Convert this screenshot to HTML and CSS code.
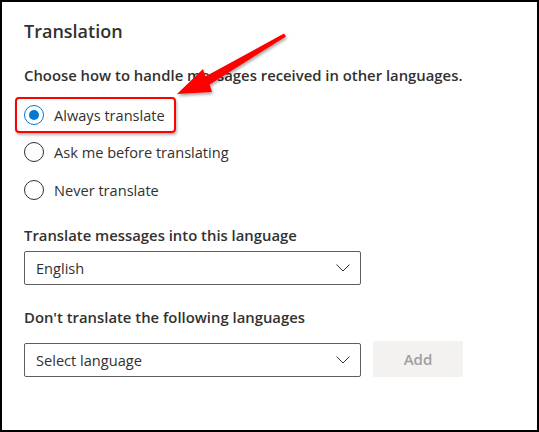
FILE: index.html
```html
<!DOCTYPE html>
<html>
<head>
<meta charset="utf-8">
<link rel="stylesheet" href="styles.css">
</head>
<body>
<div class="frame">
  <h1 class="title">Translation</h1>
  <p class="intro">Choose how to handle messages received in other languages.</p>
  <div class="radios">
    <div class="radio-row highlighted">
      <span class="radio checked"><span class="dot"></span></span>
      <span class="label">Always translate</span>
    </div>
    <div class="radio-row">
      <span class="radio"></span>
      <span class="label">Ask me before translating</span>
    </div>
    <div class="radio-row">
      <span class="radio"></span>
      <span class="label">Never translate</span>
    </div>
  </div>
  <div class="field">
    <div class="field-label">Translate messages into this language</div>
    <div class="select">
      <span class="value">English</span>
      <svg class="chev" width="14" height="8" viewBox="0 0 14 8"><path d="M0.5 0.5 L7 7 L13.5 0.5" fill="none" stroke="#323130" stroke-width="1"/></svg>
    </div>
  </div>
  <div class="field second">
    <div class="field-label">Don't translate the following languages</div>
    <div class="row">
      <div class="select">
        <span class="value placeholder">Select language</span>
        <svg class="chev" width="14" height="8" viewBox="0 0 14 8"><path d="M0.5 0.5 L7 7 L13.5 0.5" fill="none" stroke="#323130" stroke-width="1"/></svg>
      </div>
      <button class="add">Add</button>
    </div>
  </div>
  <svg class="arrow" width="539" height="432" viewBox="0 0 539 432">
    <defs>
      <filter id="sh" x="-20%" y="-20%" width="140%" height="140%">
        <feGaussianBlur in="SourceAlpha" stdDeviation="1.5"/>
        <feOffset dx="1" dy="2"/>
        <feComponentTransfer><feFuncA type="linear" slope="0.35"/></feComponentTransfer>
        <feMerge><feMergeNode/><feMergeNode in="SourceGraphic"/></feMerge>
      </filter>
    </defs>
    <path d="M177 94 L212 92 L209.7 84.4 L286 36.5 L284 33.5 L205.3 76.6 L203 69 Z" fill="#ff0000" filter="url(#sh)"/>
  </svg>
</div>
</body>
</html>
```
FILE: styles.css
```css
html, body { margin: 0; padding: 0; background: #fff; }
body { font-family: "Open Sans", "Noto Sans", sans-serif; color: #323130; }
.frame {
  position: relative;
  width: 539px; height: 432px; box-sizing: border-box;
  border: 2px solid #000;
  padding: 16px 22px 0 22px;
}
.title { margin: 0; font-size: 18px; font-weight: 600; line-height: 26px; color: #323130; }
.intro { margin: 21px 0 0 0; font-size: 14.85px; line-height: 20px; font-weight: 600; }
.radios { display: flex; flex-direction: column; margin-top: 11px; }
.radio-row { display: flex; align-items: center; height: 37.5px; gap: 10px; position: relative; }
.radio-row.highlighted::before {
  content: ""; position: absolute; left: -9px; top: 0.5px; width: 157px; height: 32px;
  border: 2px solid #ff0000; border-radius: 4px;
  box-shadow: 1px 2px 3px rgba(0,0,0,0.3);
}
.radio { width: 18px; height: 18px; border: 1px solid #323130; border-radius: 50%; display: flex; align-items: center; justify-content: center; flex: none; }
.radio.checked { border-color: #0078d4; }
.dot { width: 10px; height: 10px; border-radius: 50%; background: #0078d4; }
.label { font-size: 14.6px; line-height: 20px; }
.field { margin-top: 16px; }
.field.second { margin-top: 22px; }
.field-label { font-size: 14.85px; font-weight: 600; line-height: 20px; }
.select {
  margin-top: 6px; width: 337px; height: 34px; box-sizing: border-box;
  border: 1px solid #605e5c; border-radius: 2px;
  display: flex; align-items: center; justify-content: space-between;
  padding: 0 10px 0 11px;
}
.value { font-size: 14.6px; }
.chev { display: block; }
.row { display: flex; align-items: flex-end; gap: 12px; margin-top: 14px; }
.row .select { margin-top: 0; }
.add {
  width: 90px; height: 36px; border: none; border-radius: 2px;
  background: #f3f2f1; color: #a19f9d; font-family: inherit; font-size: 15px; font-weight: 600;
}
.arrow { position: absolute; left: -2px; top: -2px; pointer-events: none; }
```
